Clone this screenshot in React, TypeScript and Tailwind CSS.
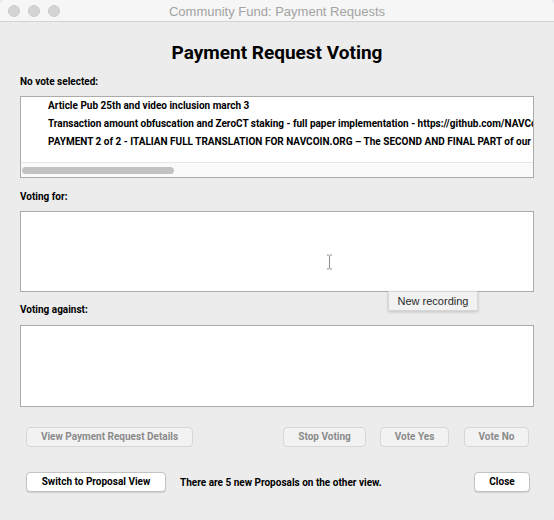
import React from "react";

const rows = [
  "Article Pub 25th and video inclusion march 3",
  "Transaction amount obfuscation and ZeroCT staking - full paper implementation - https://github.com/NAVCoin/navcoin-core/pull/",
  "PAYMENT 2 of 2 - ITALIAN FULL TRANSLATION FOR NAVCOIN.ORG – The SECOND AND FINAL PART of our job for the Italian translation",
];

function DisabledBtn({ label, w, cls = "" }: { label: string; w: string; cls?: string }) {
  return (
    <div
      className={`${w} ${cls} h-[20px] rounded-[4px] border border-[#d6d6d6] bg-[#f2f2f2] flex items-center justify-center text-[10px] font-bold text-[#8b8b8b] leading-none`}
    >
      {label}
    </div>
  );
}

function Btn({ label, w, cls = "" }: { label: string; w: string; cls?: string }) {
  return (
    <div
      className={`${w} ${cls} h-[20px] rounded-[4px] border border-[#c3c3c3] bg-white shadow-[0_1px_1px_rgba(0,0,0,0.12)] flex items-center justify-center text-[10px] font-bold text-black leading-none`}
    >
      {label}
    </div>
  );
}

export default function App() {
  return (
    <div className="w-[554px] h-[520px] bg-[#e9e8ef]">
      <div className="relative w-full h-full rounded-[5px] overflow-hidden bg-[#ececec] flex flex-col font-['Roboto',sans-serif] text-black">
        {/* title bar */}
        <div className="h-[22px] bg-[#f6f6f6] border-b border-[#d2d2d2] grid grid-cols-[1fr_auto_1fr] items-center">
          <div className="flex gap-[8px] pl-[8px]">
            <div className="w-[12px] h-[12px] rounded-full bg-[#d4d4d4] border border-[#cacaca]" />
            <div className="w-[12px] h-[12px] rounded-full bg-[#d4d4d4] border border-[#cacaca]" />
            <div className="w-[12px] h-[12px] rounded-full bg-[#d4d4d4] border border-[#cacaca]" />
          </div>
          <div className="font-['Liberation_Sans',sans-serif] text-[13px] text-[#a3a3a3] leading-none pt-[1px]">
            Community Fund: Payment Requests
          </div>
          <div />
        </div>

        <div className="px-[20px] flex flex-col">
          <div className="mt-[21px] h-[20px] leading-[20px] text-center text-[19px] font-bold">
            Payment Request Voting
          </div>

          <div className="mt-[12px] h-[14px] leading-[14px] text-[10px] font-bold">No vote selected:</div>

          <div className="mt-[7px] h-[82px] bg-white border border-[#ababab] flex flex-col overflow-hidden">
            <div className="flex-1 flex flex-col">
              {rows.map((r) => (
                <div
                  key={r}
                  className="h-[18px] leading-[18px] pl-[27px] whitespace-nowrap overflow-hidden text-[10px] font-bold"
                >
                  {r}
                </div>
              ))}
            </div>
            <div className="h-[15px] border-t border-[#e7e7e7] bg-[#fafafa] flex items-center pl-[1px]">
              <div className="w-[152px] h-[7px] rounded-full bg-[#c2c2c2]" />
            </div>
          </div>

          <div className="mt-[12px] h-[14px] leading-[14px] text-[10px] font-bold">Voting for:</div>
          <div className="mt-[7px] h-[81px] bg-white border border-[#ababab]" />

          <div className="mt-[11px] h-[14px] leading-[14px] text-[10px] font-bold">Voting against:</div>
          <div className="mt-[8px] h-[82px] bg-white border border-[#ababab]" />

          <div className="mt-[20px] flex items-center pl-[6px]">
            <DisabledBtn label="View Payment Request Details" w="w-[167px]" />
            <div className="flex-1" />
            <DisabledBtn label="Stop Voting" w="w-[83px]" />
            <DisabledBtn label="Vote Yes" w="w-[69px]" cls="ml-[14px]" />
            <DisabledBtn label="Vote No" w="w-[65px]" cls="ml-[15px] mr-[5px]" />
          </div>

          <div className="mt-[25px] flex items-center pl-[6px]">
            <Btn label="Switch to Proposal View" w="w-[140px]" />
            <div className="ml-[14px] text-[10px] font-bold">There are 5 new Proposals on the other view.</div>
            <div className="flex-1" />
            <Btn label="Close" w="w-[56px]" cls="mr-[4px]" />
          </div>
        </div>

        {/* text cursor */}
        <svg className="absolute left-[326px] top-[254px]" width="7" height="16" viewBox="0 0 7 16">
          <path d="M1 1h2M4 1h2M3.5 1.5v13M1 15h2M4 15h2" stroke="#8a8a8a" strokeWidth="1" fill="none" />
        </svg>

        {/* tooltip */}
        <div className="absolute left-[388px] top-[291px] w-[90px] h-[20px] bg-[#f2f2f2] border border-[#d6d6d6] shadow-[0_1px_3px_rgba(0,0,0,0.18)] flex items-center justify-center font-['Liberation_Sans',sans-serif] text-[11px] text-[#2a2a2a]">
          New recording
        </div>
      </div>
    </div>
  );
}
